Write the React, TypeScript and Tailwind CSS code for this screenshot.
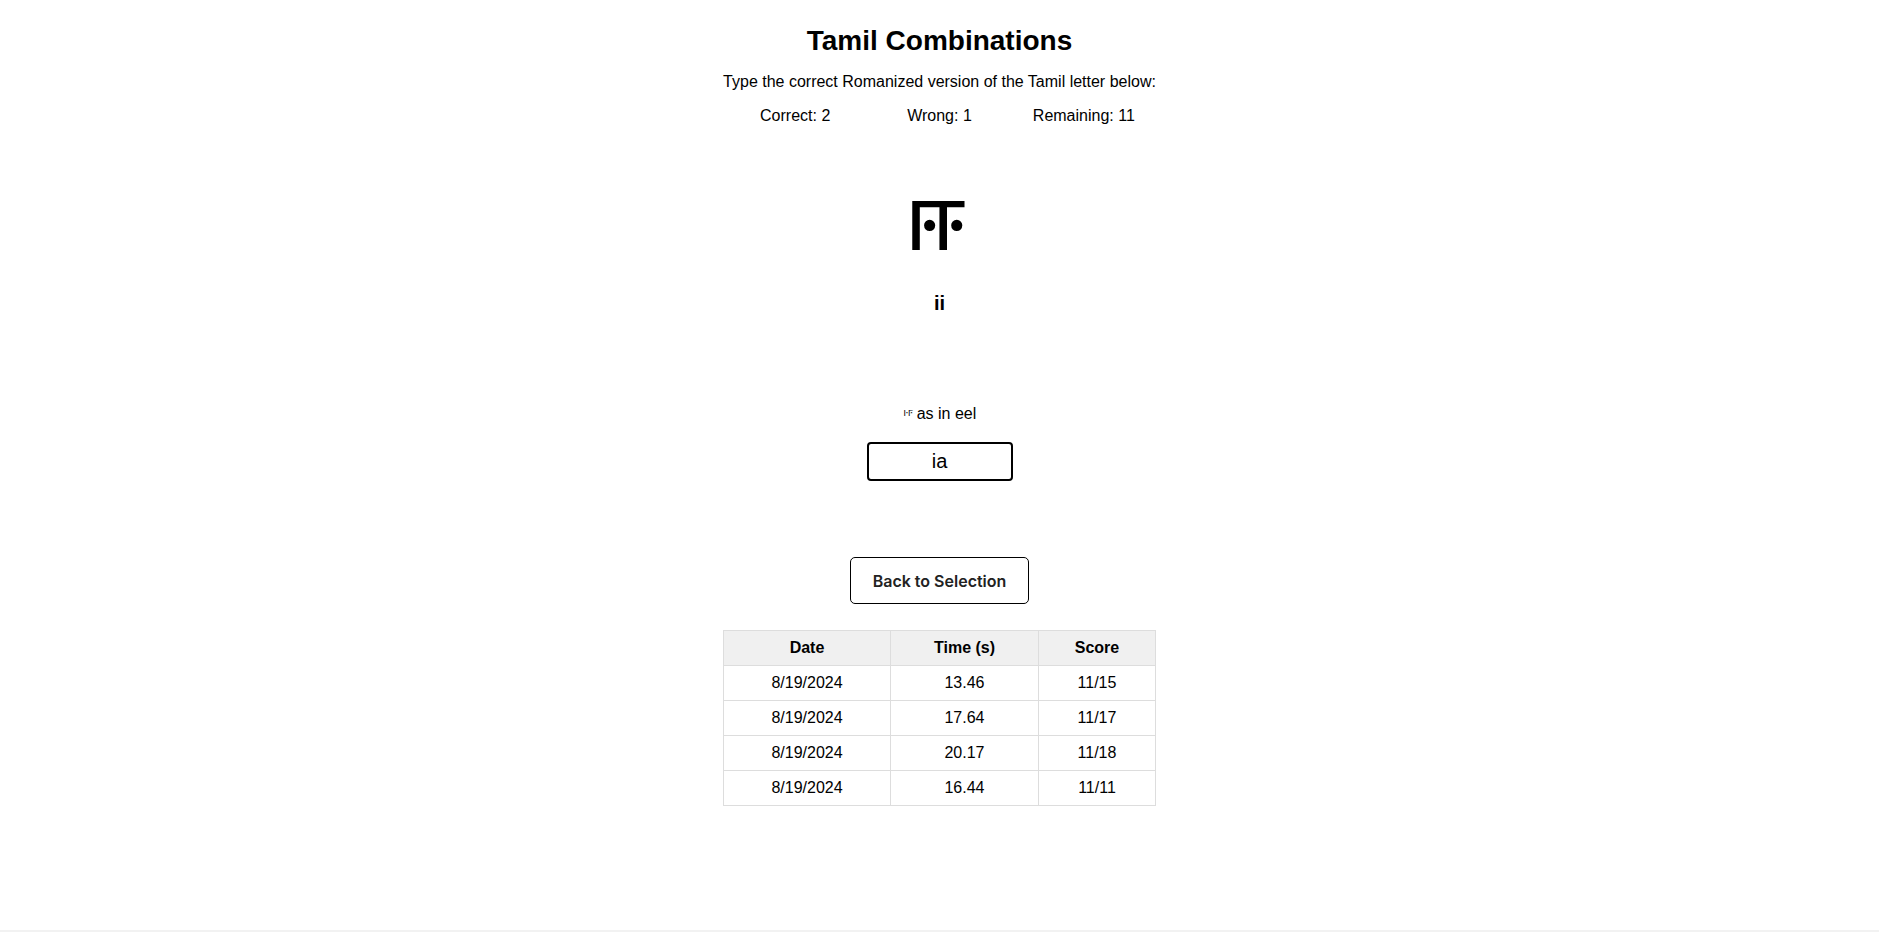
import React, { useState } from 'react';

const history = [
  { date: '8/19/2024', time: '13.46', score: '11/15' },
  { date: '8/19/2024', time: '17.64', score: '11/17' },
  { date: '8/19/2024', time: '20.17', score: '11/18' },
  { date: '8/19/2024', time: '16.44', score: '11/11' },
];

const App: React.FC = () => {
  const [answer, setAnswer] = useState('ia');

  return (
    <div className="min-h-screen bg-white font-['Liberation_Sans',Arial,sans-serif] text-black">
      <div className="min-h-[930px] flex flex-col items-center">
        <h1 className="text-[28px] font-bold leading-none mt-[27px]">Tamil Combinations</h1>
        <p className="text-base mt-[18px] leading-[18px]">Type the correct Romanized version of the Tamil letter below:</p>

        {/* Score row */}
        <div className="w-[433px] grid grid-cols-3 text-center text-base mt-[16px] leading-[18px]">
          <span>Correct: 2</span>
          <span>Wrong: 1</span>
          <span>Remaining: 11</span>
        </div>

        {/* Current letter */}
        <div className="mt-[59px] mr-2 text-[88px] leading-none font-['Noto_Sans_Tamil','Noto_Sans',sans-serif]">ஈ</div>
        <div className="mt-[20px] text-xl font-bold leading-[22px]">ii</div>

        <p className="mt-[90px] text-base leading-[18px] h-[18px]">
          <span className="text-[14px] leading-none align-[3px] mr-[4px]">ஈ</span>as in eel
        </p>

        <input
          type="text"
          value={answer}
          onChange={(e) => setAnswer(e.target.value)}
          className="mt-[20px] w-[146px] h-[39px] border-2 border-black rounded-[4px] text-center text-xl outline-none"
        />

        <button
          type="button"
          className="mt-[76px] w-[179px] h-[47px] border border-black rounded-[5px] bg-white text-[#222] text-base font-semibold font-['Inter',sans-serif]"
        >
          Back to Selection
        </button>

        {/* Past results */}
        <table className="mt-[26px] w-[433px] border-collapse text-base">
          <thead>
            <tr className="bg-[#f0f0f0]">
              <th className="w-[167px] h-[35px] border border-[#dddddd] font-bold">Date</th>
              <th className="w-[148px] h-[35px] border border-[#dddddd] font-bold">Time (s)</th>
              <th className="h-[35px] border border-[#dddddd] font-bold">Score</th>
            </tr>
          </thead>
          <tbody>
            {history.map((row, i) => (
              <tr key={i}>
                <td className="h-[35px] border border-[#dddddd] text-center">{row.date}</td>
                <td className="h-[35px] border border-[#dddddd] text-center">{row.time}</td>
                <td className="h-[35px] border border-[#dddddd] text-center">{row.score}</td>
              </tr>
            ))}
          </tbody>
        </table>
      </div>
      <div className="h-[2px] bg-[#f2f2f2]" />
    </div>
  );
};

export default App;
